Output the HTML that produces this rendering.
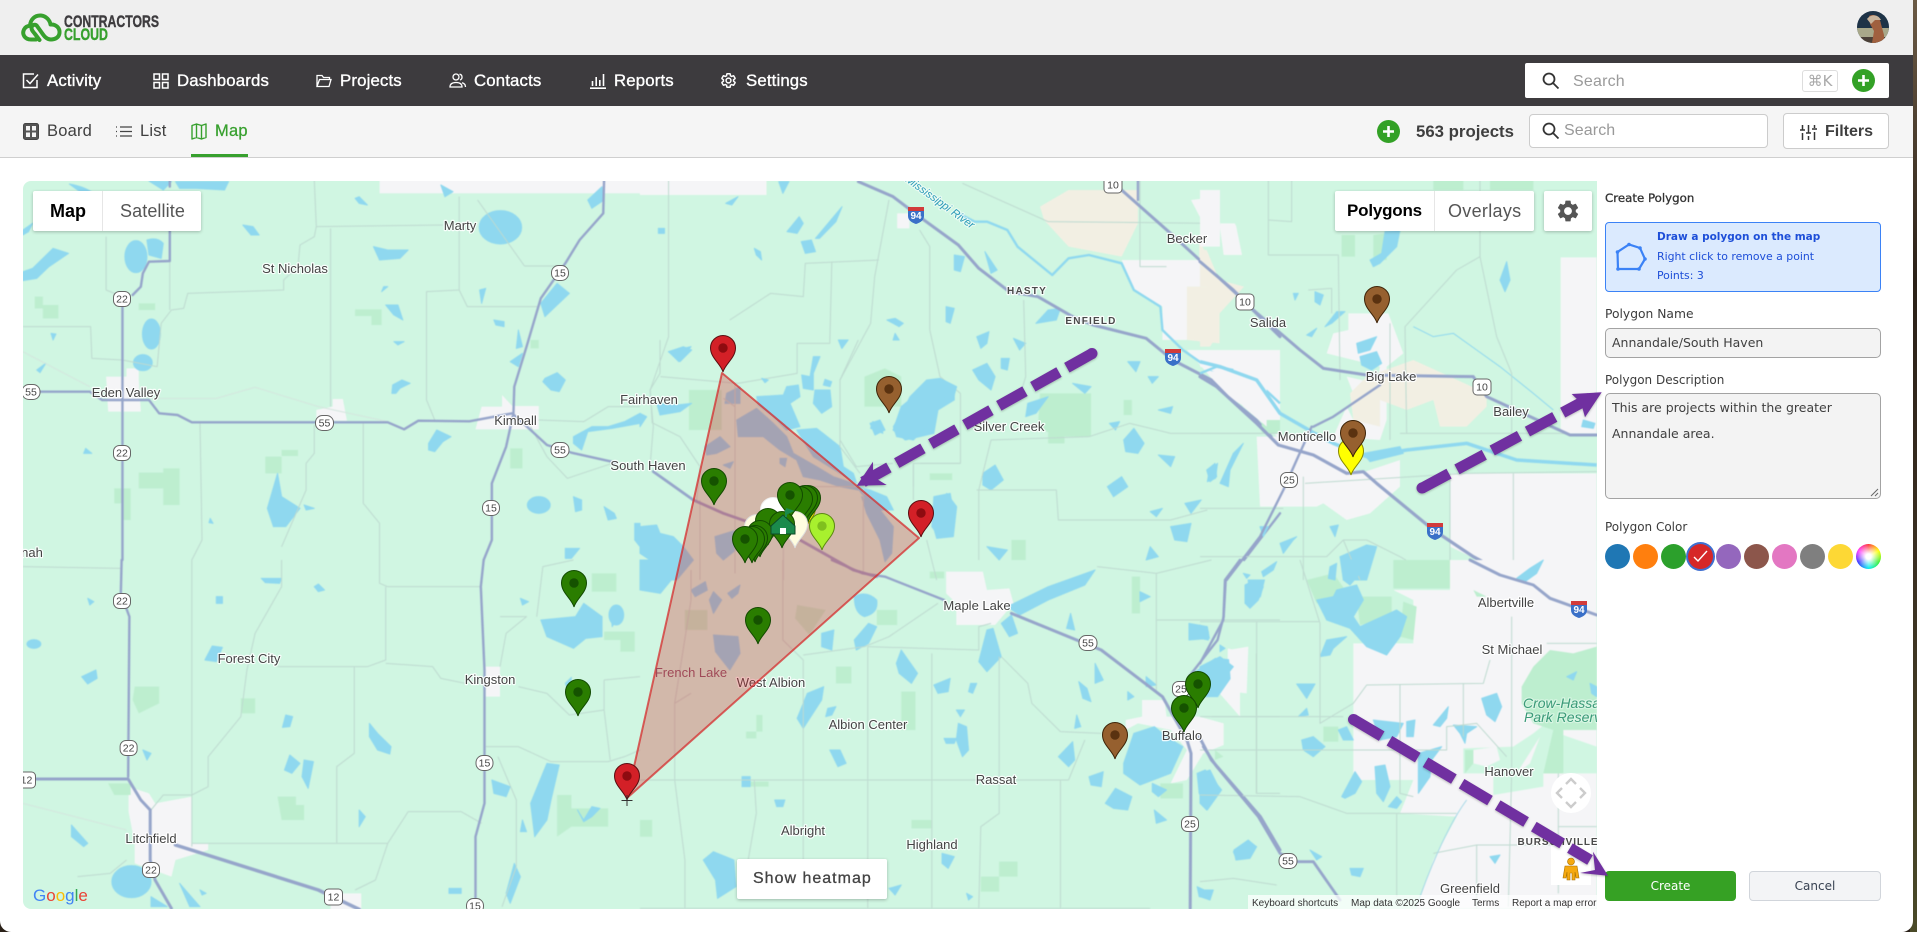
<!DOCTYPE html>
<html><head><meta charset="utf-8"><title>Contractors Cloud</title>
<style>
html,body{margin:0;padding:0;width:1917px;height:932px;overflow:hidden;background:#2a2118}
*{box-sizing:border-box}
#strip{position:absolute;left:1910px;top:0;width:7px;height:932px;background:linear-gradient(#6b5a45,#2b2118 30%,#3a2f22 60%,#4a4a28)}
#page{position:absolute;left:0;top:0;width:1913px;height:932px;background:#fff;border-radius:0 0 11px 11px;overflow:hidden;font-family:"Liberation Sans",sans-serif}
.abs{position:absolute}
#top{left:0;top:0;width:1913px;height:55px;background:#efefef}
#nav{left:0;top:55px;width:1913px;height:51px;background:#3d3b3e}
#sub{left:0;top:106px;width:1913px;height:52px;background:#f5f5f5;border-bottom:1px solid #cfcfcf}
.nt{position:absolute;top:0;line-height:51px;font-size:16.800px;color:#fff;-webkit-text-stroke:.35px #fff;letter-spacing:.15px;white-space:nowrap}
.st{position:absolute;top:0;line-height:51px;font-size:16.500px;color:#3f3f3f;white-space:nowrap;letter-spacing:.2px}
.ic{position:absolute;overflow:visible}
#map{left:23px;top:181px;width:1574px;height:728px;overflow:hidden;border-radius:8px 0 0 8px;background:#d0f6e2}
.ctl{position:absolute;background:#fff;box-shadow:0 1px 3px rgba(0,0,0,.25);border-radius:2px;height:40px;top:10px}
.ctl span{position:absolute;top:0;line-height:40px;font-size:18px;color:#555;white-space:nowrap}
.lab{position:absolute;font-family:"DejaVu Sans","Liberation Sans",sans-serif;font-size:12px;color:#3c3c3c;white-space:nowrap;line-height:14px}
.inp{position:absolute;left:1605px;width:276px;background:#f3f3f3;border:1px solid #a3a3a3;border-radius:5px;font-family:"DejaVu Sans","Liberation Sans",sans-serif;font-size:12.500px;color:#3f3f3f}
.dot{position:absolute;width:25px;height:25px;border-radius:50%;top:544px}
svg text{font-family:"Liberation Sans",sans-serif}
.lk path,.lk ellipse{fill:#8fd8ef;stroke:#8fd8ef;stroke-width:1;stroke-linejoin:round;vector-effect:non-scaling-stroke}
.pk{fill:#bdeecf}
.ur{fill:#f5f5f7}
.tn{fill:#f2efe3}
.rd path{fill:none;stroke:#bedad0;stroke-width:1;vector-effect:non-scaling-stroke;stroke-linejoin:round}
.lr path{fill:none;stroke:#d4e6de;stroke-width:1;vector-effect:non-scaling-stroke}
.hw path{fill:none;stroke:#96a5ca;stroke-width:2.400;vector-effect:non-scaling-stroke;stroke-linejoin:round;stroke-linecap:round}
.rv path{fill:none;stroke:#8fd8ef;stroke-width:2.400;vector-effect:non-scaling-stroke;stroke-linejoin:round}
.lb text{font-size:13px;fill:#444;text-anchor:middle;paint-order:stroke;stroke:#fff;stroke-opacity:.85;stroke-width:2.400px;stroke-linejoin:round}
.bd rect{fill:#fff;stroke:#666;stroke-width:1}
.bd text{font-size:10.500px;fill:#444;text-anchor:middle}
</style></head><body>
<div id="strip"></div>
<div id="page">
<div class="abs" id="top">
<svg class="ic" style="left:20px;top:12px" width="42" height="32" viewBox="20 12 42 32"><path d="M36 39.500H31C24.500 39.500 21.800 34 24 29.500C25.400 26.800 27.500 26 30 25.800C30.400 19.500 35 15 41 15.500C46 16 49.800 20 50.500 24.500C56 24 60 28 59.500 33C59 37.500 55 39.500 51 39.500C46.500 39.500 44 36 42 33L37 26C35.500 24 32 24.500 31.500 27.500C31.200 30 33 31.500 35 34L39.500 40" fill="none" stroke="#37a02e" stroke-width="4" stroke-linecap="round" stroke-linejoin="round"/></svg>
<svg class="ic" style="left:60px;top:12px" width="105" height="32"><text x="4" y="15" font-size="16.500" font-weight="bold" fill="#3e3c3f" stroke="#3e3c3f" stroke-width=".4" textLength="95" lengthAdjust="spacingAndGlyphs">CONTRACTORS</text><text x="4" y="28" font-size="16.500" font-weight="bold" fill="#37a02e" stroke="#37a02e" stroke-width=".4" textLength="44" lengthAdjust="spacingAndGlyphs">CLOUD</text></svg>
<svg class="ic" style="left:1857px;top:11px" width="32" height="32" viewBox="0 0 32 32"><defs><clipPath id="av"><circle cx="16" cy="16" r="16"/></clipPath></defs><g clip-path="url(#av)"><rect width="32" height="32" fill="#1e3347"/><rect y="17" width="32" height="15" fill="#a8a88a"/><rect y="26" width="32" height="6" fill="#4a4038"/><path d="M12 5C18 2 23 6 24 13L27 24V32H15L17 20L13 13Z" fill="#a0603f"/><path d="M10 8C14 3 21 3 24 9L18 9L14 13Z" fill="#c9b49c"/></g></svg>
</div>
<div class="abs" id="nav">
<svg class="ic" style="left:22px;top:17px" width="17" height="17" viewBox="0 0 17 17" fill="none" stroke="#fff" stroke-width="1.500"><path d="M15 8V15.500H1.500V2H12"/><path d="M4.500 8L8 11.500L16 2.500"/></svg>
<span class="nt" style="left:47px">Activity</span>
<svg class="ic" style="left:153px;top:18px" width="16" height="16" viewBox="0 0 16 16" fill="none" stroke="#fff" stroke-width="1.500"><rect x="1" y="1" width="5.500" height="5.500"/><rect x="9.500" y="1" width="5.500" height="5.500"/><rect x="1" y="9.500" width="5.500" height="5.500"/><rect x="9.500" y="9.500" width="5.500" height="5.500"/></svg>
<span class="nt" style="left:177px">Dashboards</span>
<svg class="ic" style="left:316px;top:19px" width="16" height="14" viewBox="0 0 16 14" fill="none" stroke="#fff" stroke-width="1.300"><path d="M1 12.500V1.500H6L7.500 3.500H13.500V5.500M1 12.500H13L15 5.500H3.500Z"/></svg>
<span class="nt" style="left:340px">Projects</span>
<svg class="ic" style="left:449px;top:18px" width="17" height="15" viewBox="0 0 17 15" fill="none" stroke="#fff" stroke-width="1.300"><circle cx="7" cy="4" r="3"/><path d="M1 14C1 10.500 4 9.500 7 9.500S13 10.500 13 14H1Z"/><path d="M10.500 1.200A3 3 0 0 1 11 7M13 9.800C15 10.300 16.500 11.500 16.500 14"/></svg>
<span class="nt" style="left:474px">Contacts</span>
<svg class="ic" style="left:590px;top:18px" width="16" height="16" viewBox="0 0 16 16" fill="none" stroke="#fff" stroke-width="1.600"><path d="M0 15.200H16M2.500 13V8M6.200 13V4M9.800 13V7M13.500 13V1"/></svg>
<span class="nt" style="left:614px">Reports</span>
<svg class="ic" style="left:720px;top:17px" width="17" height="17" viewBox="0 0 24 24" fill="none" stroke="#fff" stroke-width="2.100"><path d="M19.140 12.940c.04-.3.060-.61.060-.94 0-.32-.02-.64-.07-.94l2.030-1.580a.49.49 0 0 0 .12-.61l-1.920-3.320a.488.488 0 0 0-.59-.22l-2.390.96c-.5-.38-1.030-.7-1.620-.94l-.36-2.540a.484.484 0 0 0-.48-.41h-3.840c-.24 0-.43.17-.47.41l-.36 2.540c-.59.24-1.130.57-1.620.94l-2.390-.96c-.22-.08-.47 0-.59.22L2.740 8.870c-.12.21-.08.47.12.61l2.030 1.580c-.05.3-.09.63-.09.94s.02.64.07.94l-2.030 1.580a.49.49 0 0 0-.12.61l1.920 3.320c.12.22.37.29.59.22l2.390-.96c.5.38 1.030.7 1.620.94l.36 2.540c.05.24.24.41.48.41h3.840c.24 0 .44-.17.47-.41l.36-2.540c.59-.24 1.130-.56 1.620-.94l2.390.96c.22.08.47 0 .59-.22l1.920-3.320c.12-.22.07-.47-.12-.61l-2.010-1.580z"/><circle cx="12" cy="12" r="3.400"/></svg>
<span class="nt" style="left:746px">Settings</span>
<div class="abs" style="left:1525px;top:8px;width:364px;height:35px;background:#fff;border-radius:2px">
<svg class="ic" style="left:17px;top:9px" width="18" height="18" viewBox="0 0 18 18" fill="none" stroke="#333" stroke-width="1.800"><circle cx="7" cy="7" r="5.500"/><path d="M11 11L16.500 16.500"/></svg>
<span class="abs" style="left:48px;top:0;line-height:38px;font-size:16px;color:#9a9a9a;letter-spacing:.2px">Search</span>
<span class="abs" style="left:277px;top:7px;width:36px;height:22px;border:1px solid #ddd;border-radius:3px;font:15px/20px 'DejaVu Sans',sans-serif;color:#aaa;text-align:center;white-space:nowrap">⌘K</span>
<svg class="ic" style="left:327px;top:6px" width="23" height="23" viewBox="0 0 23 23"><circle cx="11.500" cy="11.500" r="11.500" fill="#33a126"/><path d="M11.500 6V17M6 11.500H17" stroke="#fff" stroke-width="2.600"/></svg>
</div>
</div>
<div class="abs" id="sub">
<svg class="ic" style="left:23px;top:17px" width="16" height="17" viewBox="0 0 16 17"><rect x=".5" y=".5" width="15" height="16" rx="2" fill="#555" stroke="#444"/><g fill="#f5f5f5"><rect x="3" y="3" width="4" height="4.500"/><rect x="9" y="3" width="4" height="4.500"/><rect x="3" y="9.500" width="4" height="4.500"/><rect x="9" y="9.500" width="4" height="4.500"/></g></svg>
<span class="st" style="left:47px">Board</span>
<svg class="ic" style="left:116px;top:19px" width="16" height="13" viewBox="0 0 16 13" fill="none" stroke="#444" stroke-width="1.300"><path d="M4 2H16M4 6.500H16M4 11H16"/><path d="M0 2H2M0 6.500H2M0 11H2" stroke-dasharray="1 1"/></svg>
<span class="st" style="left:140px">List</span>
<svg class="ic" style="left:191px;top:17px" width="16" height="17" viewBox="0 0 16 17" fill="none" stroke="#37a02e" stroke-width="1.400" stroke-linejoin="round"><path d="M1 2.500L5.500 1L10.500 2.500L15 1V14.500L10.500 16L5.500 14.500L1 16ZM5.500 1V14.500M10.500 2.500V16"/></svg>
<span class="st" style="left:215px;color:#37a02e;-webkit-text-stroke:.25px #37a02e">Map</span>
<div class="abs" style="left:191px;top:48px;width:57px;height:3px;background:#37a02e"></div>
<svg class="ic" style="left:1377px;top:14px" width="23" height="23" viewBox="0 0 23 23"><circle cx="11.500" cy="11.500" r="11.500" fill="#33a126"/><path d="M11.500 6V17M6 11.500H17" stroke="#fff" stroke-width="2.600"/></svg>
<span class="abs" style="left:1416px;top:0;line-height:51px;font-size:16.800px;font-weight:bold;color:#3f3f3f;white-space:nowrap">563 projects</span>
<div class="abs" style="left:1529px;top:8px;width:239px;height:34px;background:#fff;border:1px solid #ccc;border-radius:4px">
<svg class="ic" style="left:12px;top:7px" width="18" height="18" viewBox="0 0 18 18" fill="none" stroke="#333" stroke-width="1.800"><circle cx="7" cy="7" r="5.500"/><path d="M11 11L16.500 16.500"/></svg>
<span class="abs" style="left:34px;top:0;line-height:32px;font-size:16px;color:#999;letter-spacing:.1px">Search</span>
</div>
<div class="abs" style="left:1783px;top:7px;width:106px;height:36px;background:#fff;border:1px solid #ccc;border-radius:4px">
<svg class="ic" style="left:16px;top:11px" width="17" height="15" viewBox="0 0 17 15" fill="none" stroke="#333" stroke-width="1.500"><path d="M2.500 0V5M0 5H5M2.500 8V15M8.500 0V8M6 8H11M8.500 11V15M14.500 0V3M12 4H17M14.500 7V15"/></svg>
<span class="abs" style="left:41px;top:0;line-height:36px;font-size:16px;font-weight:bold;color:#3f3f3f;white-space:nowrap">Filters</span>
</div>
</div>

<div class="abs" id="map">
<svg width="1574" height="728" viewBox="23 181 1574 728" style="position:absolute;left:0;top:0">
<defs>
<path id="pin" d="M0 0C-2 -8 -12.500 -14 -12.500 -24A12.500 12.500 0 1 1 12.500 -24C12.500 -14 2 -8 0 0Z"/>
</defs>
<g style="filter:blur(.55px)">
<!-- zoom-6 region -->
<g transform="translate(0,180) scale(.40816,.33333)">
<rect class="ur" x="930" y="0" width="640" height="40"/>
<g class="ur"><path d="M260 590H310V565H340V600L345 695H265Z"/><path d="M775 690L815 680V657H840L850 722H775Z"/><path d="M1180 680H1230V645L1255 678H1320V748H1165Z"/></g>
<g class="pk"><path d="M85 350H105V375H143V415H105V385H85Z"/><path d="M340 370H380V390H340Z"/><path d="M870 388H935V435H910V408H870Z"/><path d="M650 830H690V810H730V828H690V880H650Z"/><path d="M340 878H400V865H440V975H400V925H340Z"/><path d="M280 925H320V1020H340V1020H300V970H280Z"/><path d="M1250 805H1280V865H1250Z"/><path d="M1300 480H1320V505H1300Z"/></g>
<g class="lk">
<path d="M170 12Q210 20 235 45L215 50L190 30Z"/><path d="M365 3L420 5L400 30Z"/><path d="M430 5L560 5L550 30L480 25L440 25Z"/><path d="M56 275L80 265L130 205L168 220L120 260L90 295L56 302Z"/><path d="M56 150L80 130L70 155L56 165Z"/>
<ellipse cx="333" cy="230" rx="27" ry="48"/><path d="M360 180Q385 170 400 190L395 235L365 225Z"/><ellipse cx="371" cy="462" rx="22" ry="45"/><ellipse cx="350" cy="548" rx="23" ry="24"/>
<path d="M595 135L620 140L635 165L615 165Z"/><path d="M915 200L950 210L1000 210L980 235L930 240Z"/><path d="M880 50L900 75L880 70L870 55Z"/><ellipse cx="1226" cy="142" rx="52" ry="50"/>
<path d="M945 375L975 375L987 420L965 405Z"/><path d="M985 600L1005 610L980 625L970 640L960 640L962 615Z"/><path d="M1335 595L1365 578L1385 600L1370 635L1350 630L1330 605Z"/><path d="M1050 790L1070 750L1105 770L1085 785L1065 815L1050 810Z"/>
<path d="M680 880L690 950L735 985L700 1040L670 1040L655 985Z"/><path d="M745 975L770 985L750 990Z"/><ellipse cx="1320" cy="975" rx="28" ry="25"/><path d="M1405 950L1425 960L1425 990L1410 995Z"/><path d="M1210 420L1235 425L1235 440L1215 435Z"/><path d="M1480 980L1505 1000L1510 1015L1490 1020Z"/><path d="M1385 1105L1420 1105L1400 1135L1385 1135Z"/>
<path d="M1405 770L1450 740L1490 740L1530 725L1568 700L1568 730L1500 745L1440 755L1425 810L1405 790Z"/><path d="M1325 370L1365 310L1395 340L1335 410Z"/><path d="M1270 450L1280 500L1265 505Z"/><path d="M1250 545L1280 520L1270 560Z"/><path d="M1175 330L1190 325L1180 370Z"/><path d="M1555 1030L1568 1030L1568 1100L1555 1080Z"/><path d="M1440 60L1475 20L1480 60L1450 85Z"/><path d="M1080 15L1110 35L1090 50Z"/>
<path d="M125 460L137 462L130 480Z"/><path d="M90 570L112 550L98 578Z"/><path d="M210 805L225 820L205 820Z"/><path d="M940 320L950 320L935 335Z"/><path d="M965 485L990 485L975 495Z"/><path d="M515 1015L522 1030L512 1028Z"/>
</g>
<g class="lr"><path d="M56 515L220 620"/><path d="M370 655L530 655L625 622L780 680L950 725"/></g>
<g class="rd"><path d="M770 0L775 140L1085 135"/><path d="M810 145V680"/><path d="M775 140L770 170L735 195L730 260L695 300L695 330L460 340L450 385L420 390L395 430L385 560L300 540L225 535L222 440L56 440"/><path d="M1125 50V330L1045 335V660L1065 720"/><path d="M1125 330L1145 380H1320"/><path d="M260 170V330L290 345"/><path d="M416 240V390"/><path d="M490 730L495 1080L470 1140"/><path d="M770 735V820L750 850V930L690 1100"/><path d="M890 730V970L930 1030V1140"/><path d="M1320 720L1430 725L1490 680H1568"/><path d="M1300 740L1340 830L1390 895L1500 850"/><path d="M1170 60L1285 258H1380"/></g>
<g class="hw"><path d="M300 360V1140"/><path d="M325 345L345 320L350 280L365 245L416 243V150"/><path d="M1480 0L1478 100L1420 180L1385 250L1325 355L1290 500L1260 620L1258 700L1240 800L1205 910V1080L1185 1140"/><path d="M60 635H220L250 660H365L390 700L435 705L470 727H950L990 748L1025 722L1150 724L1255 700L1300 750L1340 795L1400 818L1510 848"/><path d="M416 0V20"/></g>
</g>
<!-- zoom-7 region -->
<g transform="translate(0,560) scale(.40816,.33333)">
<g class="ur"><path d="M315 680L365 700L380 730L470 710V850H510V870L430 900L420 950L330 910V850L315 755Z"/><path d="M1190 320H1225V410H1190Z"/><path d="M810 1000H885V1050H810Z"/></g>
<g class="pk"><path d="M330 380H390V430L340 460L325 420Z"/><path d="M680 710H725V735H745V780H690Z"/><path d="M1365 705H1400V745H1490V800H1400L1365 830Z"/><path d="M590 415H625V460H590Z"/><path d="M265 670H320V705H280Z"/><path d="M1450 40H1510V95H1450Z"/><path d="M1480 215H1555V275H1520V240H1480Z"/></g>
<g class="lk">
<path d="M1325 180L1410 170L1430 130L1475 170L1475 230L1435 235L1405 265L1340 230Z"/><ellipse cx="1510" cy="165" rx="18" ry="30"/><ellipse cx="83" cy="252" rx="17" ry="13"/><path d="M200 350L235 330L238 355L215 372Z"/><path d="M520 258L545 262L530 305L502 300Z"/><path d="M700 465L717 470L710 500L692 502Z"/><path d="M905 490L925 520L958 560L955 582L925 570L905 530Z"/><path d="M710 585L735 610L715 640L697 630Z"/><path d="M745 600L768 605L755 685L740 650Z"/><path d="M1340 610L1370 615L1350 720L1340 780L1310 830L1300 730Z"/><path d="M1205 660L1250 680L1240 710L1210 700Z"/><ellipse cx="322" cy="965" rx="48" ry="48"/><path d="M440 970L490 1040L465 1040Z"/><path d="M640 55L690 55L685 70L650 68Z"/><path d="M780 72L795 90L780 95L770 80Z"/><path d="M1385 370L1400 352L1395 400Z"/><path d="M175 795L215 850L205 860L175 830Z"/><path d="M1260 910L1275 950L1250 1030L1240 1000Z"/><path d="M1100 985L1130 985L1130 1000L1100 1000Z"/><path d="M880 750L895 770L880 800Z"/><path d="M1280 780L1290 815L1275 815Z"/><path d="M1415 750L1430 780L1450 740L1470 745L1450 770L1430 785Z"/><path d="M215 115L230 125L220 135Z"/><path d="M370 1010L410 1040H370Z"/><path d="M530 110H545V130H530Z"/><path d="M490 990L505 1000L495 1005Z"/><path d="M1275 115L1295 125L1280 135Z"/><path d="M1495 150L1525 150L1500 200Z"/><path d="M350 570L370 580L360 600Z"/></g>
<g class="lr"><path d="M56 730L310 810"/></g>
<g class="rd"><path d="M56 20L296 25"/><path d="M470 0V860"/><path d="M690 0V80L625 220L605 330L590 470L510 590V680L470 705H400L370 750"/><path d="M930 0V70L950 80H1180"/><path d="M945 80V300L900 320L680 320"/><path d="M945 310L1060 320L1080 355L1140 370"/><path d="M868 320V580L825 620V850"/><path d="M470 850H950L1000 755H1130L1180 790"/><path d="M950 850L920 960L870 990"/><path d="M1190 560H1270L1350 605H1490L1530 590L1568 570"/><path d="M1270 380L1340 400L1395 465L1480 450"/><path d="M1480 360V450L1495 600"/><path d="M1225 170L1290 170L1240 220L1225 320"/><path d="M190 950L270 940L310 900"/><path d="M1220 590L1265 720V920L1230 1040"/><path d="M1405 0L1330 20L1315 170"/><path d="M1480 360L1568 350"/></g>
<g class="hw"><path d="M298 0L296 100L317 170L314 650"/><path d="M1185 0L1178 80L1187 330V730L1165 830V1040"/></g>
<g class="hw"><path d="M65 657H314L345 720L368 750V900L380 960L420 1045" style="stroke-width:3"/><path d="M430 855L780 990L880 1048" style="stroke-width:3.500"/></g>
</g>
<!-- zoom-8 region -->
<g transform="translate(640,560) scale(.40816,.33333)">
<g class="ur"><path d="M750 35H840L850 90L905 85L915 130L870 195H775V130L750 100Z"/><path d="M1230 420L1285 420L1290 470L1370 470L1430 490V555L1380 580L1340 660L1300 670L1340 570L1300 510L1220 490L1190 510V480L1230 470Z"/><path d="M1440 265L1490 280L1470 360L1470 470L1420 400L1440 340Z"/></g>
<g class="pk"><path d="M110 150H165V210H110Z"/><path d="M385 135L455 150L415 225L380 175Z"/><path d="M480 320H518V370H480Z"/><path d="M260 515L300 515V465L285 465V535H260Z"/><path d="M640 395H675V510H640Z"/><path d="M1205 50H1225V160H1205Z"/><path d="M580 150H630V195H580Z"/><path d="M835 950H880V905H925V950H880V995H835Z"/><path d="M0 780H30V830H0Z"/><path d="M665 780H715V805H665Z"/><path d="M710 35H745V55H710Z"/><path d="M1275 670H1330V715H1275Z"/><path d="M270 665H315V680H270Z"/></g>
<g class="lk">
<path d="M525 110Q555 90 580 120Q585 160 550 170Q525 160 525 110Z"/><path d="M525 240L560 190L580 200L560 250L530 270Z"/><path d="M445 220L475 210L470 270L445 260Z"/><path d="M628 310L640 270L680 340L665 370L635 340Z"/><path d="M900 140L1000 80L1115 30L1090 75L1000 120L930 165Z"/><path d="M885 190L910 165L925 220L905 230Z"/><path d="M850 210L865 205L885 290L850 335L830 305Z"/><path d="M720 375L760 355L755 395L730 400Z"/><path d="M810 370L825 370L815 400L805 395Z"/><path d="M385 475L410 400L450 380L445 420L400 505Z"/><path d="M460 445L480 440L470 465L455 470Z"/><path d="M775 450L795 450L785 470Z"/><path d="M780 490L800 500L805 570L790 590L775 540Z"/><path d="M745 535L775 535L770 550L750 550Z"/><path d="M465 570L490 570L505 610L485 620Z"/><path d="M1025 590L1060 545L1065 600L1050 620Z"/><path d="M1345 190L1390 200L1395 235L1345 240Z"/><path d="M1185 610L1210 520L1260 500L1290 530L1330 560L1300 640L1225 675L1185 640Z"/><path d="M1355 340L1410 295L1450 300L1455 340L1415 410L1375 410Z"/><path d="M1365 640L1385 630L1425 690L1390 750L1370 700Z"/><path d="M1100 650L1135 635L1130 680L1105 675Z"/><path d="M1140 730L1165 685L1205 710L1195 750L1160 745Z"/><path d="M1255 670L1290 690L1270 710L1255 695Z"/><path d="M1260 750L1290 780L1265 790Z"/><path d="M1455 870L1490 840L1510 860L1490 890L1460 900Z"/><path d="M155 900L180 875L230 900L235 980L190 1015L185 960Z"/><path d="M740 880L770 890L755 925L740 910Z"/><path d="M1490 60L1530 60L1520 110L1495 135Z"/><path d="M1055 160L1065 210L1045 205Z"/><path d="M1115 310L1135 360L1115 370Z"/><path d="M1075 365L1095 385L1105 425L1085 415Z"/><path d="M1070 465L1080 500L1065 505Z"/><path d="M1195 395L1210 410L1195 420Z"/><path d="M1240 350L1265 375L1240 380Z"/><path d="M1225 95L1250 110L1225 125Z"/><path d="M180 95L200 120L180 160L170 120Z"/><path d="M125 90L160 65L165 90L135 110Z"/><path d="M215 100L245 75L240 100L225 115Z"/><path d="M180 225L240 230L245 280L220 330L185 275Z"/><path d="M250 650H270V680H250Z"/><path d="M330 720H355L350 740H335Z"/><path d="M610 985L640 975L625 1005Z"/><path d="M800 1000L815 1010L805 1020Z"/><path d="M1365 980L1400 1000L1395 1015L1370 1010Z"/><path d="M0 0H100L90 40L50 100L0 90Z"/></g>
<g class="rd"><path d="M0 660H1050L1090 540"/><path d="M1030 660V1045"/><path d="M880 290V760L835 800L830 1045"/><path d="M715 280V1045"/><path d="M558 260L830 270V200L860 190"/><path d="M558 260V1045"/><path d="M400 300V520"/><path d="M400 285L550 260L610 230L730 130"/><path d="M85 430L125 400"/><path d="M85 430V660L110 900V1045"/><path d="M1265 40V400"/><path d="M1265 180H1568"/><path d="M1510 280V700H1568"/><path d="M1400 470H1568"/><path d="M1400 570H1568"/><path d="M885 290L950 370L960 430L1030 515L1130 520"/><path d="M1120 20L1265 40L1400 0"/><path d="M125 30V120L85 430"/><path d="M350 0V240L400 300"/><path d="M280 660L285 760L265 900"/><path d="M400 520L400 900"/><path d="M0 1045H1250"/></g>
<g class="hw"><path d="M470 0L545 40L600 50L745 120"/><path d="M910 160L1060 235L1130 270L1280 410L1340 540L1350 580L1348 1045" style="stroke-width:3"/><path d="M1470 0L1435 60L1430 170L1415 240L1345 350"/><path d="M1370 530L1400 600L1520 770L1568 870" style="stroke-width:3"/></g>
</g>
<!-- zoom-9 region -->
<g transform="translate(640,180) scale(.40816,.33333)">
<rect class="ur" x="0" y="0" width="310" height="45"/>
<g class="tn"><path d="M980 80L1050 30L1220 30V130L1180 230L1050 200L990 120Z"/></g>
<g class="ur"><path d="M1180 240H1370L1420 320H1340V480H1280V380L1210 330Z"/><path d="M1340 510H1568V780L1510 700L1440 650L1340 510Z"/><path d="M630 100H660V145H630Z"/><path d="M1350 60L1420 50V130H1380Z"/><path d="M1420 135H1460L1475 225H1430Z"/></g>
<g class="tn"><path d="M1370 180L1420 300L1480 320L1420 400V490L1340 480V320H1420L1370 240Z"/></g>
<g class="pk"><path d="M120 630H200V750H120Z"/><path d="M980 640H1105V770H1020L975 740Z"/><path d="M550 590L600 565L640 590V680H550Z"/><path d="M1185 660H1205V705H1185Z"/><path d="M710 880H765V900H710Z"/><path d="M910 1080H945V1140H910Z"/><path d="M1000 700H1040V790H1000Z"/></g>
<g class="lk">
<path d="M360 155L390 110L400 130L385 160Z"/><path d="M395 185L420 180L430 215L405 220Z"/><path d="M430 175L495 80L480 125L440 175Z"/><path d="M280 205L295 215L298 240L285 225Z"/><path d="M490 480H510L495 505Z"/><path d="M625 415L645 430L635 440L605 420Z"/><path d="M625 460L635 480L620 480Z"/><path d="M770 225L795 230L785 275L770 270Z"/><path d="M845 215L875 270L860 280Z"/><path d="M750 380L770 385L760 430L750 425Z"/><path d="M825 470L855 455L850 490L835 505Z"/><path d="M915 475L945 490L930 510Z"/><path d="M885 535L905 535L900 570L885 565Z"/><path d="M815 570L850 550L870 590L860 630L830 600Z"/><path d="M1185 780L1210 745L1235 790L1220 820L1190 815Z"/><path d="M1270 690L1305 680L1300 700Z"/><path d="M840 880L870 855L890 900L860 930L840 915Z"/><path d="M1145 920L1180 890L1195 920L1160 950Z"/><path d="M1270 825L1310 830L1300 860Z"/><path d="M1395 870L1415 850L1410 895L1390 905Z"/><path d="M1335 970L1375 960L1350 1000Z"/><path d="M720 950L760 940L770 1010L730 1065L715 1040Z"/><path d="M850 1100L900 1110L880 1140Z"/><path d="M1250 1100L1270 1130L1240 1140Z"/><path d="M1300 1040L1350 1030L1340 1085L1310 1080Z"/><path d="M1000 390L1030 385L1020 420L970 430Z"/><path d="M950 670L1000 650L970 700L945 710Z"/><path d="M640 680L710 610L770 625L770 660L730 690L720 760L650 780L620 750Z"/><path d="M570 725L590 730L595 760L565 745Z"/><path d="M70 515L125 500L95 545Z"/><path d="M1060 610L1105 620L1090 640Z"/><path d="M1150 730L1175 725L1165 750Z"/><path d="M1250 995L1280 985L1265 1010Z"/><path d="M1195 545L1225 545L1215 575Z"/><path d="M1245 590L1270 590L1255 610Z"/><path d="M210 70L240 50L225 75Z"/><path d="M45 145H60V160H45Z"/><path d="M340 5L365 5L350 40Z"/></g>
<g class="rv"><path d="M780 100L820 125L850 125L900 150L925 200L1010 285L1050 235L1100 225L1180 250L1210 330L1275 380L1280 450L1330 510L1400 570L1480 570L1568 670"/></g>
<g class="rd"><path d="M70 0V470L25 630L30 730"/><path d="M220 420L320 340L400 350L405 250L585 240"/><path d="M470 245L465 490H385V580L240 610L50 590"/><path d="M610 60L575 290L565 430L490 600V780L530 860L620 850"/><path d="M685 150L710 200V450L735 590L785 640V850H670V920"/><path d="M940 360L945 590L930 650"/><path d="M860 780L1100 770L1200 730L1300 760H1568"/><path d="M860 780L830 930V1140"/><path d="M825 930H1020L1025 1020H1300L1390 990"/><path d="M790 10L1000 125L1400 130"/><path d="M1225 0V260H1290"/></g>
<g class="hw"><path d="M535 5L620 50L690 115L780 195L830 265L905 335L975 350L1060 410L1110 435L1240 475L1305 540L1400 600L1440 650L1510 720L1568 800" style="stroke-width:3"/><path d="M1180 30L1300 160L1460 340L1568 470" style="stroke-width:3"/><path d="M1220 0V60"/><path d="M1568 1000L1480 1140"/></g>
</g>
<!-- zoom-5 region: around polygon -->
<g transform="translate(640,340) scale(.33333)">
<g class="lk">
<path d="M260 160L300 140V190L255 190Z"/><path d="M290 240L350 205L400 250L440 290L460 340L530 380L580 410L640 430L655 450L600 440L540 420L490 410L470 360L420 330L370 290L295 290Z"/><path d="M350 170L430 165L440 140L475 135L480 170L450 190L480 260L440 270L400 230L355 195Z"/><path d="M470 270L530 265L600 320L610 380L640 400L650 430L600 400L520 350Z"/><path d="M650 440L690 450L740 470L760 510L720 510L680 480Z"/><path d="M665 470L720 510L760 560L755 640L735 665L720 600L680 520Z"/><path d="M195 320L240 290L270 320L230 340L200 345Z"/><path d="M225 590L290 570L300 620L250 660L230 640Z"/><path d="M0 560L50 555L60 580L100 590L130 620L160 660L110 720H50L30 660L0 640Z"/><path d="M85 35L130 20L155 30L120 65Z"/><path d="M525 150H570L575 200L545 220L520 190Z"/><path d="M485 105L510 110L520 50H540L520 100V150L490 145Z"/><path d="M555 118L575 125L570 140L550 135Z"/><path d="M790 210L810 170L860 120L900 115L950 140L940 175L900 170L880 240L820 300L770 290L760 260Z"/><path d="M690 250L720 240L735 270L705 285Z"/><path d="M880 560L920 460L950 500L940 590L890 595Z"/><path d="M50 190L110 195L155 190L120 215L60 225Z"/><path d="M0 220L20 230L0 260Z"/><path d="M595 0H620L605 25Z"/><path d="M365 115L385 120L375 128Z"/><path d="M250 375L280 365L270 385Z"/><path d="M420 355L440 355L435 380L420 370Z"/></g>
<g class="rd"><path d="M60 0V100L30 150L40 260L30 380"/><path d="M655 0L600 120V320L660 400"/><path d="M285 130V700M430 440V720M180 480L180 720M520 440L670 440V700M250 175L285 200"/><path d="M40 250L120 290L180 380L170 480"/><path d="M840 370H960M820 370V480M860 600L890 720"/></g>
<g class="hw"><path d="M40 395L160 480L250 520L480 600L640 690L710 710" style="stroke-width:2.800"/></g>
</g>
<!-- zoom-10 region -->
<g transform="translate(1200,180) scale(.33333)">
<g class="pk"><path d="M425 165H465V230H425Z"/><path d="M520 165L560 160V240L520 240Z"/><path d="M870 0H1000V30H870Z"/><path d="M700 0H790V30H700Z"/><path d="M185 720H240V760H185Z"/><path d="M1140 935H1185V955H1140Z"/></g>
<g class="ur"><path d="M0 30H60V200H0Z"/><path d="M60 130H105L125 225H85Z"/><path d="M0 510H200V740L130 680L60 580L0 560Z"/><path d="M1082 232H1190V760H1082Z"/><path d="M445 400H565L610 520L560 560V720L540 780L400 770L440 680L460 720V640L440 590L530 610L540 560L380 520L400 460L445 450Z"/><path d="M170 770H420V840L480 880L600 840V920L510 1000L440 1020L370 970L350 980H180Z"/><path d="M750 880H1190V1200H960L750 1100Z"/></g>
<g class="tn"><path d="M450 640L500 590L640 540L860 640V680L800 740H720L700 660L620 690L540 660V740L460 720Z"/><path d="M0 210H20L70 330L20 320H0Z"/><path d="M0 410L50 470L30 500H0Z"/></g>
<g class="lk"><path d="M510 240L545 220L555 155L600 150L590 200L540 250L520 260Z"/><path d="M900 300L920 245L930 300L915 335Z"/><path d="M345 335L370 345L360 375L345 365Z"/><path d="M375 440L410 395L435 395L395 430Z"/><path d="M320 465L350 445L335 470Z"/><path d="M470 490L530 470L510 510L475 520Z"/><path d="M480 530L530 515L545 550L515 570L485 555Z"/><path d="M20 870L45 850L50 890L30 905Z"/><path d="M60 910L100 820L130 790L90 870L85 920Z"/><path d="M420 1130L500 1095L530 1100L500 1200H430Z"/><path d="M390 1040L415 1035L405 1070Z"/><path d="M950 1190L1000 1170L1010 1200Z"/><path d="M280 340L295 340L285 360Z"/><path d="M240 1090L290 1070L280 1080L250 1120Z"/><path d="M180 1040L205 1040L190 1070Z"/><path d="M1150 720L1185 730L1180 745L1145 740Z"/><path d="M490 820L600 800L610 820L510 845Z"/></g>
<g class="rv"><path d="M0 545L60 560L170 600L240 700L370 775L400 790L500 830L620 810L800 790L950 840L1190 855" style="stroke-width:3.500"/><path d="M0 580L50 560L100 570"/><path d="M640 440L700 470L760 460L830 510L900 560L1000 640L1060 690" style="stroke-width:1"/></g>
<g class="rd"><path d="M205 0V225H415L420 600"/><path d="M205 120L275 125V0"/><path d="M325 330L395 325V400"/><path d="M615 440L620 760"/><path d="M615 440L770 270L840 230L890 470L935 580V770"/><path d="M0 760H230M600 760H1080L1190 768"/><path d="M315 910L800 880L1190 875"/><path d="M0 985H250"/><path d="M0 1130H380L430 1080H500L600 1130L720 1200"/><path d="M750 880V1200"/><path d="M940 880V1200"/><path d="M570 430V780"/><path d="M840 0V230"/><path d="M310 890V1200"/><path d="M430 1080L480 1200"/></g>
<g class="hw"><path d="M0 590L50 620L170 730L235 795L340 825L440 880L490 875L530 910L700 1050L820 1130L950 1200" style="stroke-width:3.200"/><path d="M0 245L100 330L160 390L300 510L370 565L500 585L820 590L860 650L1110 765H1190" style="stroke-width:3"/><path d="M335 740L290 840L250 930L180 1070L80 1200"/><path d="M340 740L400 710L540 615"/></g>
</g>
<!-- zoom-11 region -->
<g transform="translate(1200,560) scale(.33333)">
<g class="ur"><path d="M460 250H640V120L580 90H750V0H1190V1045H650L700 900L770 770L600 760L640 660H460Z"/><path d="M85 270L145 260L140 400L95 395Z"/><path d="M0 490H70V525H0Z"/></g>
<path d="M790 565L940 560L1000 520L1050 480L1075 520L1190 560V640H1030V680L880 705V640H790Z" fill="#d0f6e2"/>
<path d="M820 570L890 560L900 600L860 620L820 610Z" class="ur"/>
<path d="M950 640L1020 530L990 610Z" class="ur"/>
<g class="pk"><path d="M965 380L1000 320L1050 270L1120 280L1190 260V510H1090V640H1030L1060 510L1000 490L965 430Z"/><path d="M320 60L400 40L450 110L350 130Z"/><path d="M470 110H575V175L480 195Z"/><path d="M610 125L650 140L640 240L600 230Z"/><path d="M580 0H750V85H580Z"/><path d="M795 570H820V610L795 640Z"/><path d="M45 570L70 590L45 600Z"/><path d="M370 500H415V545H370Z"/><path d="M820 90L860 110L830 110Z"/></g>
<g class="lk"><path d="M350 120L400 110L410 90L470 75L490 120L460 170L480 200L590 150L620 170L600 230L560 285L500 260L450 205L380 180Z"/><path d="M390 20L410 10L405 60L385 55Z"/><path d="M430 60L440 0H495L480 40L450 75Z"/><path d="M135 75L165 60L190 80L175 120L150 145L135 130Z"/><path d="M0 195L25 215V240L0 235Z"/><path d="M0 320L60 290L100 320L60 370L20 410H0Z"/><path d="M290 372H345L320 415Z"/><path d="M295 470L320 445L325 465Z"/><path d="M305 540L340 530L375 560L340 590L310 570Z"/><path d="M415 510L440 500L460 540H430Z"/><path d="M520 480L610 490L590 530L540 540Z"/><path d="M620 485L645 480L640 530H620Z"/><path d="M700 495L745 440L740 475L720 500Z"/><path d="M760 495L830 500L800 520L795 550L780 520Z"/><path d="M845 415L890 400L905 440L885 485L860 465Z"/><path d="M655 580L725 560L695 600L690 650L655 700Z"/><path d="M525 620L555 615L570 680L550 725L530 700Z"/><path d="M425 710L465 635L485 665L465 700L435 715Z"/><path d="M565 740L590 710L605 725L590 745Z"/><path d="M100 875L140 845L170 860L150 895L110 900Z"/><path d="M450 925H490L480 950L455 945Z"/><path d="M0 640L30 630L60 690L20 750L0 730Z"/><path d="M0 990H40L30 1020L0 1010Z"/><path d="M330 870L365 890L350 900Z"/><path d="M870 890L900 885L885 910Z"/><path d="M950 55L990 25L1030 0L1010 40L975 65Z"/><path d="M360 290L380 240L440 230L400 265L390 285Z"/><path d="M130 40L150 45L140 55Z"/><path d="M185 35L230 5L220 30L190 50Z"/><path d="M1100 350L1130 335L1120 360Z"/><path d="M1170 370L1190 380V410L1175 400Z"/><path d="M60 255L75 265L60 275Z"/></g>
<g class="rd"><path d="M170 185V700"/><path d="M0 185H360"/><path d="M300 0L360 190V490L460 430L500 375L850 370L870 300"/><path d="M0 470H430"/><path d="M0 570H740V500L830 490L920 590"/><path d="M0 705L300 710L440 760H770"/><path d="M590 760V1010"/><path d="M600 375V700L640 710"/><path d="M790 370V530"/><path d="M935 170V640L925 1040"/><path d="M830 855V1045"/><path d="M700 880L830 855H1050"/><path d="M1075 640V1000"/><path d="M1075 800H1190"/><path d="M0 965L100 955L230 975"/><path d="M1040 250L1190 250"/><path d="M650 1040C680 950 740 800 800 720" style="stroke:#a6d8e6"/></g>
<g class="hw"><path d="M810 0L900 45L1000 75L1050 115L1190 165" style="stroke-width:3"/><path d="M120 0L75 60L70 180L0 310"/><path d="M10 560L50 620L175 770L240 880L290 905H340L420 1020" style="stroke-width:2.800"/></g>
</g>
</g>
<!-- badges -->
<g class="bd">
<g transform="translate(31,392)"><rect x="-9" y="-7.500" width="18" height="15" rx="7"/><text y="3.500">55</text></g>
<g transform="translate(324.500,423)"><rect x="-9" y="-7.500" width="18" height="15" rx="7"/><text y="3.500">55</text></g>
<g transform="translate(560,450)"><rect x="-9" y="-7.500" width="18" height="15" rx="7"/><text y="3.500">55</text></g>
<g transform="translate(122,299)"><rect x="-8.500" y="-7.500" width="17" height="15" rx="6"/><text y="3.500">22</text></g>
<g transform="translate(122,453)"><rect x="-8.500" y="-7.500" width="17" height="15" rx="6"/><text y="3.500">22</text></g>
<g transform="translate(122,601)"><rect x="-8.500" y="-7.500" width="17" height="15" rx="6"/><text y="3.500">22</text></g>
<g transform="translate(128.600,748)"><rect x="-8.500" y="-7.500" width="17" height="15" rx="6"/><text y="3.500">22</text></g>
<g transform="translate(151,870)"><rect x="-8.500" y="-7.500" width="17" height="15" rx="6"/><text y="3.500">22</text></g>
<g transform="translate(560,273)"><rect x="-8.500" y="-7.500" width="17" height="15" rx="7"/><text y="3.500">15</text></g>
<g transform="translate(491,508)"><rect x="-8.500" y="-7.500" width="17" height="15" rx="7"/><text y="3.500">15</text></g>
<g transform="translate(484.500,763)"><rect x="-8.500" y="-7.500" width="17" height="15" rx="7"/><text y="3.500">15</text></g>
<g transform="translate(475,906)"><rect x="-8.500" y="-7.500" width="17" height="15" rx="7"/><text y="3.500">15</text></g>
<g transform="translate(333.500,897)"><rect x="-9" y="-8" width="18" height="16" rx="4"/><text y="3.500">12</text></g>
<g transform="translate(26.500,780)"><rect x="-9" y="-8" width="18" height="16" rx="4"/><text y="3.500">12</text></g>
<g transform="translate(1088,643)"><rect x="-9" y="-7.500" width="18" height="15" rx="7"/><text y="3.500">55</text></g>
<g transform="translate(1181,689)"><rect x="-8.500" y="-7.500" width="17" height="15" rx="6"/><text y="3.500">25</text></g>
<g transform="translate(1190,824)"><rect x="-8.500" y="-7.500" width="17" height="15" rx="6"/><text y="3.500">25</text></g>
<g transform="translate(1289,480)"><rect x="-8.500" y="-7.500" width="17" height="15" rx="6"/><text y="3.500">25</text></g>
<g transform="translate(1288,861)"><rect x="-9" y="-7.500" width="18" height="15" rx="7"/><text y="3.500">55</text></g>
<g transform="translate(1113,185)"><rect x="-9" y="-8" width="18" height="16" rx="4"/><text y="3.500">10</text></g>
<g transform="translate(1245,302)"><rect x="-9" y="-8" width="18" height="16" rx="4"/><text y="3.500">10</text></g>
<g transform="translate(1482,387)"><rect x="-9" y="-8" width="18" height="16" rx="4"/><text y="3.500">10</text></g>
</g>
<!-- interstate shields -->
<g text-anchor="middle">
<g transform="translate(916,215)"><path d="M-8 -8H8V1C8 6 3 8 0 9C-3 8 -8 6 -8 1Z" fill="#3a70c8"/><path d="M-8 -8H8V-4H-8Z" fill="#d23b3b"/><text y="4" font-size="10" font-weight="bold" fill="#fff">94</text></g>
<g transform="translate(1173,357)"><path d="M-8 -8H8V1C8 6 3 8 0 9C-3 8 -8 6 -8 1Z" fill="#3a70c8"/><path d="M-8 -8H8V-4H-8Z" fill="#d23b3b"/><text y="4" font-size="10" font-weight="bold" fill="#fff">94</text></g>
<g transform="translate(1435,531)"><path d="M-8 -8H8V1C8 6 3 8 0 9C-3 8 -8 6 -8 1Z" fill="#3a70c8"/><path d="M-8 -8H8V-4H-8Z" fill="#d23b3b"/><text y="4" font-size="10" font-weight="bold" fill="#fff">94</text></g>
<g transform="translate(1579,609)"><path d="M-8 -8H8V1C8 6 3 8 0 9C-3 8 -8 6 -8 1Z" fill="#3a70c8"/><path d="M-8 -8H8V-4H-8Z" fill="#d23b3b"/><text y="4" font-size="10" font-weight="bold" fill="#fff">94</text></g>
</g>
<!-- labels -->
<g class="lb">
<text x="460" y="230">Marty</text><text x="295" y="273">St Nicholas</text><text x="126" y="397">Eden Valley</text><text x="515.500" y="425">Kimball</text><text x="32" y="557">nah</text><text x="648" y="470">South Haven</text><text x="649" y="404">Fairhaven</text><text x="249" y="663">Forest City</text><text x="490" y="684">Kingston</text><text x="151" y="843">Litchfield</text><text x="1009" y="431">Silver Creek</text><text x="1187" y="243">Becker</text><text x="1268" y="327">Salida</text><text x="1391" y="381">Big Lake</text><text x="1511" y="416">Bailey</text><text x="1307" y="441">Monticello</text><text x="977" y="610">Maple Lake</text><text x="771" y="687">West Albion</text><text x="868" y="729">Albion Center</text><text x="996" y="784">Rassat</text><text x="803" y="835">Albright</text><text x="932" y="849">Highland</text><text x="1182" y="740">Buffalo</text><text x="1506" y="607">Albertville</text><text x="1512" y="654">St Michael</text><text x="1509" y="776">Hanover</text><text x="1470" y="893">Greenfield</text>
<text x="1027" y="294" style="font-size:10px;font-weight:bold;letter-spacing:1.200px;fill:#4a4a4a">HASTY</text>
<text x="1091" y="324" style="font-size:10px;font-weight:bold;letter-spacing:1.200px;fill:#4a4a4a">ENFIELD</text>
<text x="1558" y="845" style="font-size:10px;font-weight:bold;letter-spacing:.9px;fill:#4a4a4a">BURSCHVILLE</text>
<text x="1523" y="708" style="font-size:14px;font-style:italic;text-anchor:start;fill:#3a9a78;stroke-opacity:.4">Crow-Hassan</text>
<text x="1524" y="722" style="font-size:14px;font-style:italic;text-anchor:start;fill:#3a9a78;stroke-opacity:.4">Park Reserve</text>
<text transform="translate(938,205) rotate(36)" style="font-size:11px;font-style:italic;fill:#2a9ab8;stroke-opacity:.5">Mississippi River</text>
</g>
<!-- polygon -->
<polygon points="722,373 919,538 627,798" fill="#d62728" fill-opacity=".3" stroke="#d62728" stroke-opacity=".72" stroke-width="2" stroke-linejoin="round"/>
<text x="691" y="677" font-size="13" text-anchor="middle" fill="#a04a58">French Lake</text>
<!-- pins -->
<g stroke-width="1">
<g fill="#2a7d00" stroke="#124a00">
<use href="#pin" x="574" y="607"/><use href="#pin" x="578" y="716"/><use href="#pin" x="714" y="505"/><use href="#pin" x="758" y="644"/><use href="#pin" x="1198" y="708"/><use href="#pin" x="1184" y="732"/>
</g>
<g fill="#155200"><circle cx="574" cy="583" r="4.700"/><circle cx="578" cy="692" r="4.700"/><circle cx="714" cy="481" r="4.700"/><circle cx="758" cy="620" r="4.700"/><circle cx="1198" cy="684" r="4.700"/><circle cx="1184" cy="708" r="4.700"/></g>
<g fill="#96602f" stroke="#3e2408"><use href="#pin" x="889" y="413"/><use href="#pin" x="1377" y="323"/><use href="#pin" x="1115" y="759"/></g>
<g fill="#5a3210"><circle cx="889" cy="389" r="4.700"/><circle cx="1377" cy="299" r="4.700"/><circle cx="1115" cy="735" r="4.700"/></g>
<use href="#pin" x="1351" y="475" fill="#ffff00" stroke="#8a8a00"/>
<use href="#pin" x="1353" y="457" fill="#96602f" stroke="#3e2408"/><circle cx="1353" cy="433" r="4.700" fill="#5a3210"/>
<!-- cluster -->
<use href="#pin" x="803" y="532" fill="#ffff00" stroke="#8a8a00"/>
<g fill="#2a7d00" stroke="#124a00"><use href="#pin" x="808" y="522"/><use href="#pin" x="805" y="522"/><use href="#pin" x="800" y="523"/></g>
<use href="#pin" x="773" y="534" fill="#fff" stroke="#eee"/>
<use href="#pin" x="795" y="548" fill="#fffde0" stroke="#ddd"/>
<g fill="#2a7d00" stroke="#124a00"><use href="#pin" x="790" y="519"/></g><circle cx="790" cy="495" r="4.700" fill="#155200"/>
<use href="#pin" x="757" y="551" fill="#fffde0" stroke="#ddd"/>
<g fill="#2a7d00" stroke="#124a00"><use href="#pin" x="768" y="545"/><use href="#pin" x="782" y="548"/><use href="#pin" x="760" y="557"/><use href="#pin" x="755" y="562"/><use href="#pin" x="752" y="563"/><use href="#pin" x="745" y="563"/></g>
<circle cx="745" cy="539" r="4.700" fill="#155200"/>
<use href="#pin" x="822" y="550" fill="#a8f02e" stroke="#5a8a10"/><circle cx="822" cy="526" r="4.700" fill="#7fc01e"/>
<path d="M771 526L783 515L795 526V534H771Z" fill="#1b8a4c" stroke="#0c4a28"/><path d="M780 534V528H786V534Z" fill="#fff"/><path d="M786 510V517M786 509L792 511L786 514" stroke="#1b8a4c" stroke-width="2" fill="#1b8a4c"/>
<g fill="#d32027" stroke="#5a0d10"><use href="#pin" x="723" y="372"/><use href="#pin" x="921" y="537"/><use href="#pin" x="627" y="800"/></g>
<g fill="#8e0b10"><circle cx="723" cy="348" r="4.700"/><circle cx="921" cy="513" r="4.700"/><circle cx="627" cy="776" r="4.700"/></g>
</g>
<path d="M627 795V806M621.500 800.500H632.500" stroke="#333" stroke-width="1" fill="none"/>
<!-- attribution -->
<rect x="1248" y="895" width="349" height="14" fill="#fff" fill-opacity=".72"/>
<g font-size="10" fill="#333"><text x="1252" y="906">Keyboard shortcuts</text><text x="1351" y="906">Map data ©2025 Google</text><text x="1472" y="906">Terms</text><text x="1512" y="906">Report a map error</text></g>
<text x="33" y="901" font-size="17"><tspan fill="#4285f4">G</tspan><tspan fill="#ea4335">o</tspan><tspan fill="#fbbc05">o</tspan><tspan fill="#4285f4">g</tspan><tspan fill="#34a853">l</tspan><tspan fill="#ea4335">e</tspan></text>
<!-- fullscreen + pegman -->
<circle cx="1571" cy="793" r="20" fill="#fff"/>
<path d="M1566 784L1571 779L1576 784M1566 802L1571 807L1576 802M1562 788L1557 793L1562 798M1580 788L1585 793L1580 798" fill="none" stroke="#ccc" stroke-width="2.400"/>
<rect x="1551" y="845" width="40" height="40" fill="#fff"/>
<path d="M1571 858a3.500 3.500 0 1 1 0 7a3.500 3.500 0 1 1 0-7ZM1565 866H1577L1579 878H1576L1575 872V880H1572V873H1570V880H1567V872L1566 878H1563Z" fill="#f5a90f" stroke="#a86f00" stroke-width=".6"/>
</svg>
<div class="ctl" style="left:10px;width:168px"><span style="left:17px;color:#000;font-weight:bold">Map</span><span style="left:69px;width:1px;height:40px;background:#e6e6e6"></span><span style="left:87px;letter-spacing:.1px">Satellite</span></div>
<div class="ctl" style="left:1312px;width:199px"><span style="left:12px;color:#000;font-weight:bold;font-size:17px;letter-spacing:-.2px">Polygons</span><span style="left:99px;width:1px;height:40px;background:#e6e6e6"></span><span style="left:113px;letter-spacing:.3px">Overlays</span></div>
<div class="ctl" style="left:1521px;width:48px"><svg style="position:absolute;left:11px;top:7px" width="26" height="26" viewBox="0 0 24 24"><path fill="#555" fill-rule="evenodd" d="M19.140 12.940c.04-.3.060-.61.060-.94 0-.32-.02-.64-.07-.94l2.030-1.580a.49.49 0 0 0 .12-.61l-1.920-3.320a.488.488 0 0 0-.59-.22l-2.390.96c-.5-.38-1.030-.7-1.620-.94l-.36-2.540a.484.484 0 0 0-.48-.41h-3.840c-.24 0-.43.17-.47.41l-.36 2.540c-.59.24-1.130.57-1.620.94l-2.390-.96c-.22-.08-.47 0-.59.22L2.740 8.870c-.12.21-.08.47.12.61l2.030 1.580c-.05.3-.09.63-.09.94s.02.64.07.94l-2.030 1.580a.49.49 0 0 0-.12.61l1.920 3.320c.12.22.37.29.59.22l2.390-.96c.5.38 1.030.7 1.620.94l.36 2.540c.05.24.24.41.48.41h3.840c.24 0 .44-.17.47-.41l.36-2.540c.59-.24 1.130-.56 1.620-.94l2.390.96c.22.08.47 0 .59-.22l1.920-3.320c.12-.22.07-.47-.12-.61l-2.010-1.580zM12 15.600c-1.980 0-3.600-1.620-3.600-3.600s1.620-3.600 3.600-3.600 3.600 1.620 3.600 3.600-1.620 3.600-3.600 3.600z"/></svg></div>
<div class="ctl" style="left:714px;top:678px;width:150px"><span style="left:16px;font-size:16px;letter-spacing:1px;color:#444;-webkit-text-stroke:.3px #444">Show heatmap</span></div>
</div>

<!-- right panel -->
<div class="lab" style="left:1605px;top:191px;font-size:11.800px;color:#333;-webkit-text-stroke:.3px #333">Create Polygon</div>
<div class="abs" style="left:1605px;top:222px;width:276px;height:70px;background:#dbeafe;border:1px solid #3b82f6;border-radius:4px"></div>
<svg class="ic" style="left:1615px;top:241px" width="32" height="32" viewBox="0 0 32 32"><path d="M3 28L2.500 11L14 3.500L25 7L30 18L24 28Z" fill="none" stroke="#3b82f6" stroke-width="2.200"/><g fill="#3b82f6"><circle cx="3" cy="28" r="1.800"/><circle cx="2.500" cy="11" r="1.800"/><circle cx="14" cy="3.500" r="1.800"/><circle cx="25" cy="7" r="1.800"/><circle cx="30" cy="18" r="1.800"/><circle cx="24" cy="28" r="1.800"/></g></svg>
<div class="lab" style="left:1657px;top:230px;font-size:10.500px;font-weight:bold;color:#1d4ed8">Draw a polygon on the map</div>
<div class="lab" style="left:1657px;top:250px;font-size:10.900px;color:#1d4ed8">Right click to remove a point</div>
<div class="lab" style="left:1657px;top:269px;font-size:10.900px;color:#1d4ed8">Points: 3</div>
<div class="lab" style="left:1605px;top:307px;font-size:12.300px">Polygon Name</div>
<div class="inp" style="top:328px;height:30px;line-height:28px;padding-left:6px">Annandale/South Haven</div>
<div class="lab" style="left:1605px;top:373px">Polygon Description</div>
<div class="inp" style="top:393px;height:106px;padding:1px 6px;line-height:26px">This are projects within the greater<br>Annandale area.
<svg style="position:absolute;right:1px;bottom:1px" width="9" height="9"><path d="M1 8L8 1M5 8L8 5" stroke="#666" stroke-width="1"/></svg></div>
<div class="lab" style="left:1605px;top:520px">Polygon Color</div>
<div class="dot" style="left:1605px;background:#1f77b4"></div>
<div class="dot" style="left:1633px;background:#ff7f0e"></div>
<div class="dot" style="left:1661px;background:#2ca02c"></div>
<div class="dot" style="left:1688px;background:#d62728;box-shadow:0 0 0 2px #3f6fd0"><svg style="position:absolute;left:5px;top:6px" width="15" height="13"><path d="M1 7L5 11L14 1" fill="none" stroke="#fff" stroke-width="1.400"/></svg></div>
<div class="dot" style="left:1716px;background:#9467bd"></div>
<div class="dot" style="left:1744px;background:#8c564b"></div>
<div class="dot" style="left:1772px;background:#e377c2"></div>
<div class="dot" style="left:1800px;background:#7f7f7f"></div>
<div class="dot" style="left:1828px;background:#fdd835"></div>
<div class="dot" style="left:1856px;background:radial-gradient(circle,#fff 15%,rgba(255,255,255,0) 70%),conic-gradient(#f33,#ff0,#3e3,#0ee,#33f,#f3f,#f33)"></div>
<div class="abs" style="left:1605px;top:871px;width:131px;height:30px;background:#36a124;border-radius:4px;color:#fff;font:12px/30px 'DejaVu Sans',sans-serif;text-align:center">Create</div>
<div class="abs" style="left:1749px;top:871px;width:132px;height:30px;background:#f3f4f6;border:1px solid #d1d5db;border-radius:4px;color:#374151;font:12px/28px 'DejaVu Sans',sans-serif;text-align:center">Cancel</div>

<!-- arrows -->
<svg class="abs" style="left:0;top:0;pointer-events:none;filter:drop-shadow(0 1px 1px rgba(0,0,0,.25))" width="1913" height="932">
<g fill="none" stroke="#7030a0" stroke-width="11">
<path d="M1093 353L863 482" stroke-dasharray="30 9"/>
<path d="M1421.700 488.300L1590 398" stroke-dasharray="31 9"/>
<path d="M1353.300 719.300L1590 860" stroke-dasharray="33 9"/>
</g>
<g fill="#7030a0">
<circle cx="1092" cy="353.500" r="5.500"/><circle cx="1422" cy="488" r="5.500"/><circle cx="1353.500" cy="719.500" r="5.500"/>
<path d="M856.700 485.700L873 461.700L873 476.700L886.700 485Z"/>
<path d="M1601.700 392.300L1571.700 394L1581 403L1585 417.300Z"/>
<path d="M1608 875.700L1593 851.700L1595 870L1580 873Z"/>
</g>
</svg>
</div>
</body></html>
